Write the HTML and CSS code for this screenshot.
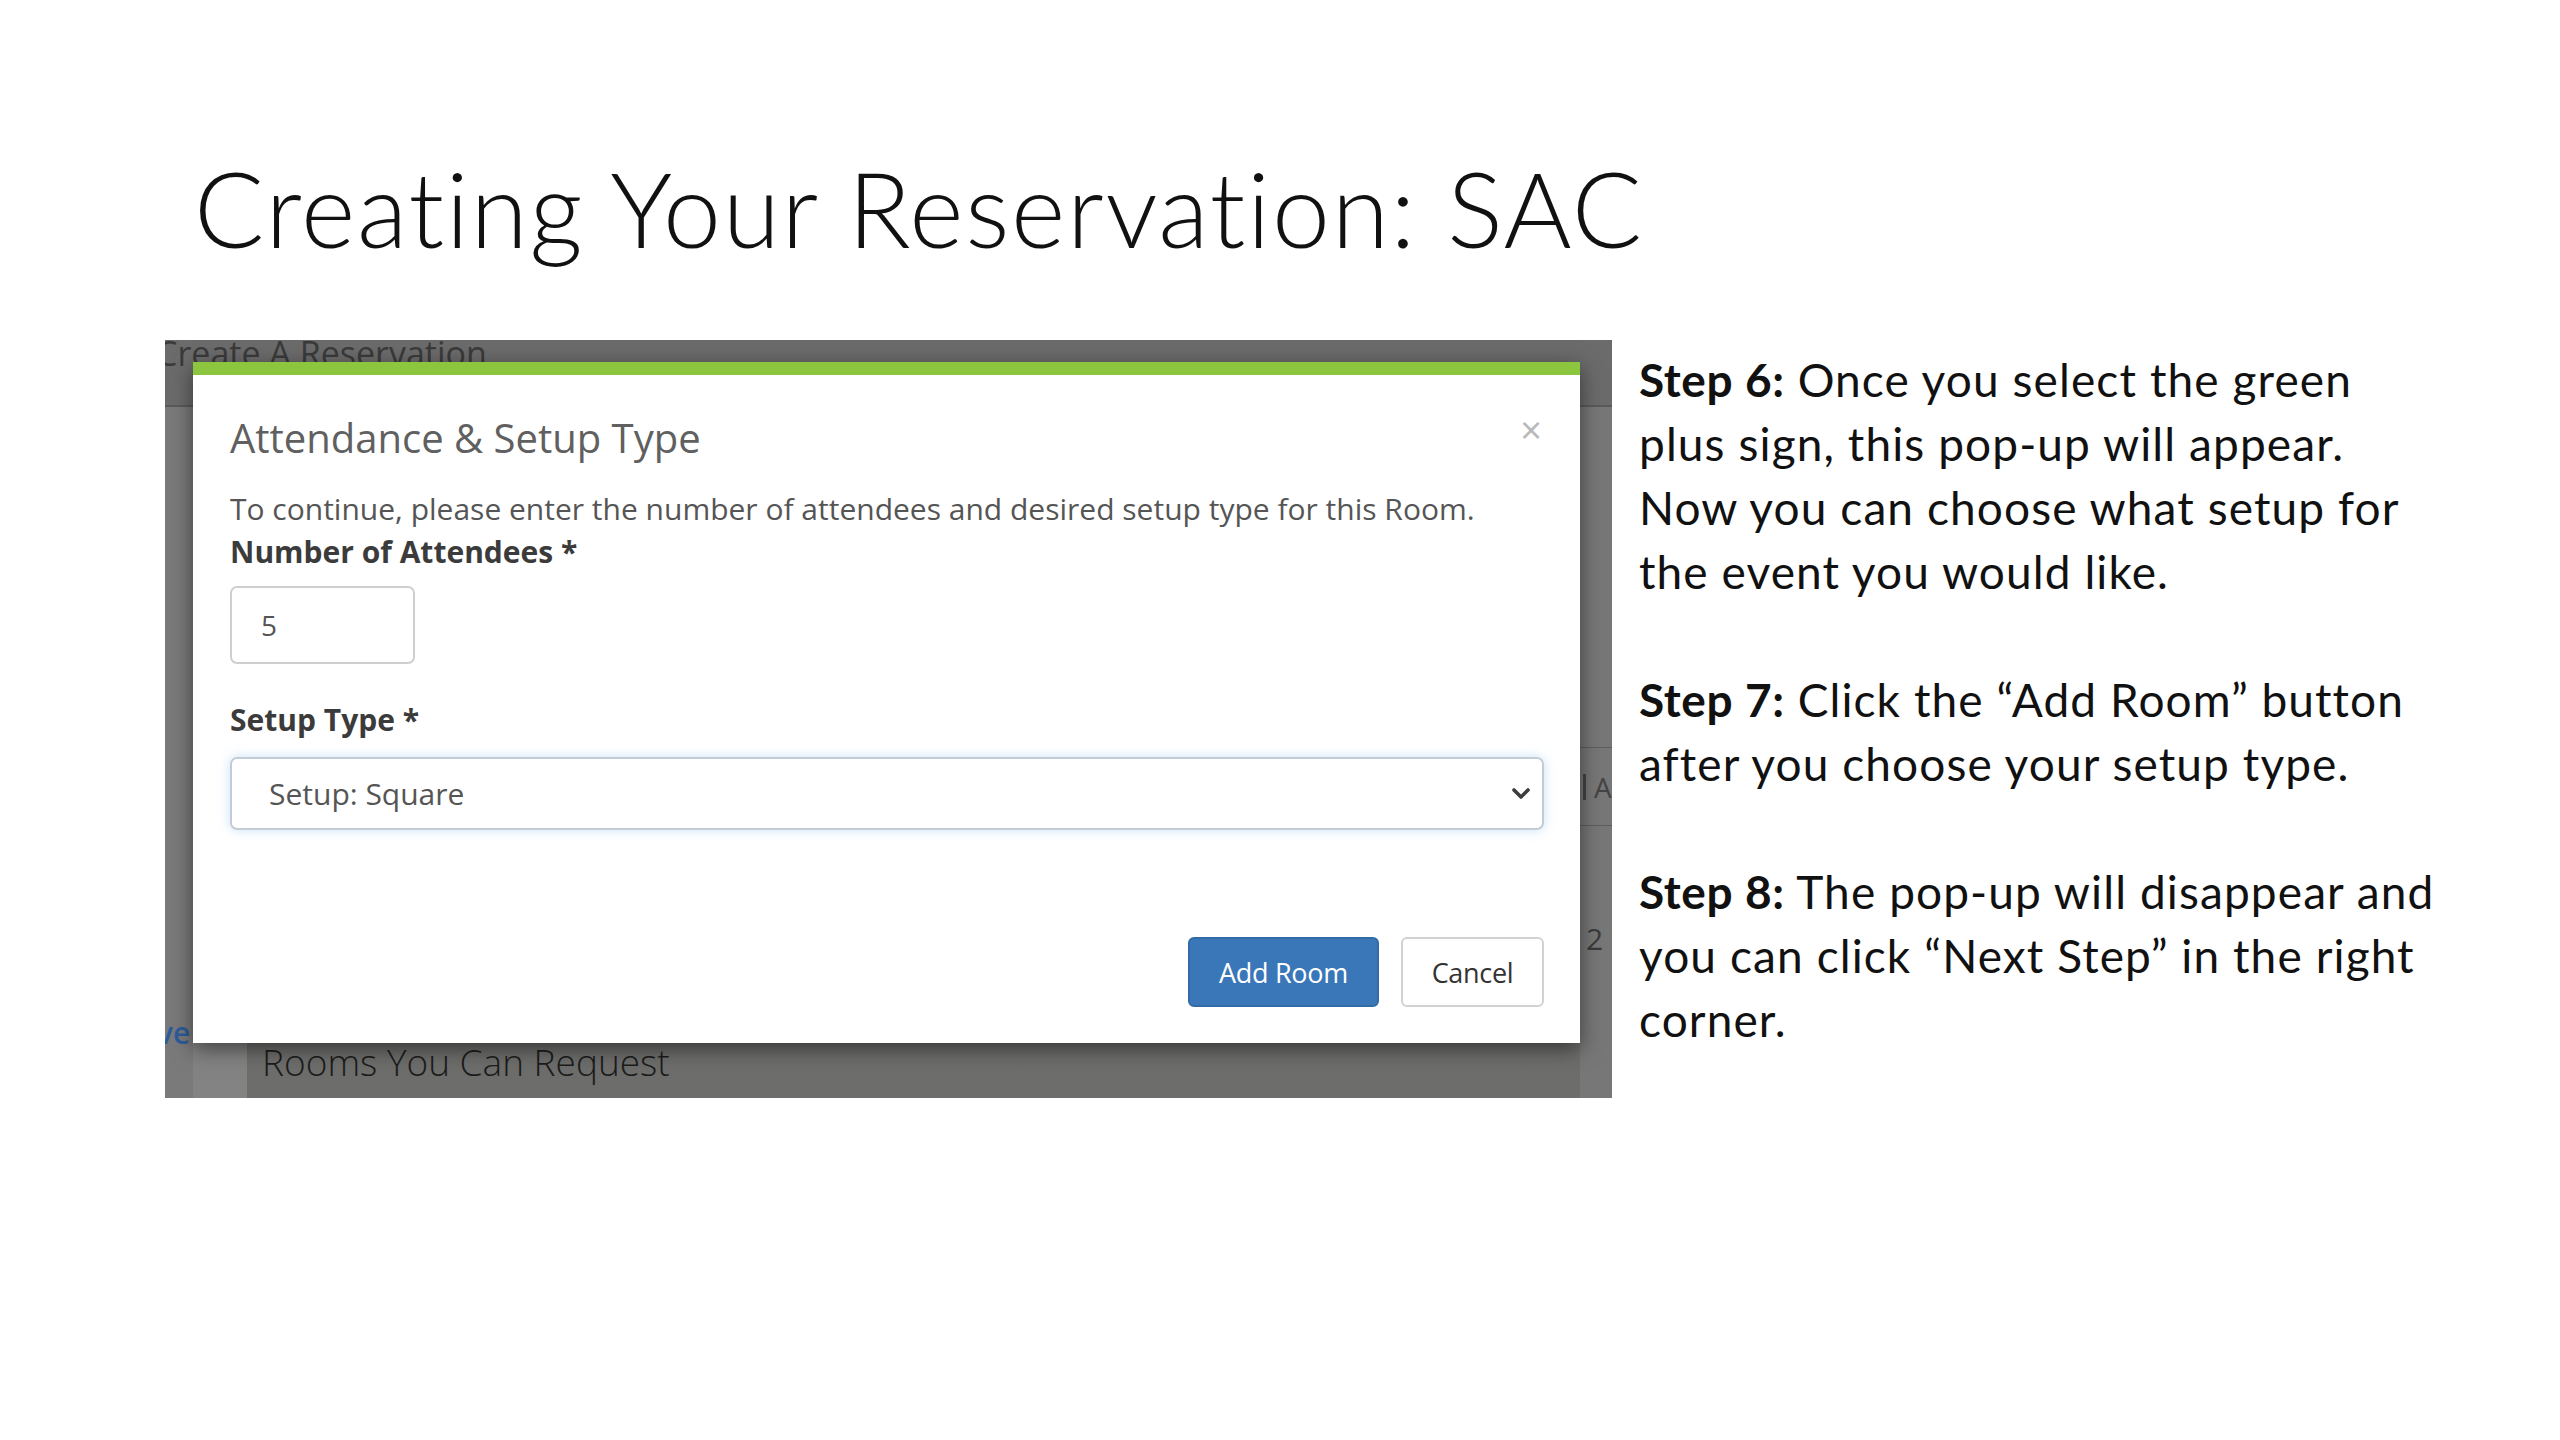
FILE: index.html
```html
<!DOCTYPE html>
<html>
<head>
<meta charset="utf-8">
<link rel="stylesheet" href="styles.css">
</head>
<body>
<div class="slide">
  <h1 class="title">Creating Your Reservation: SAC</h1>
  <div class="content">
    <div class="shot">
      <div class="bd">
        <div class="bd-head"><span class="bd-head-text">Create A Reservation</span></div>
        <div class="bd-main">
          <div class="bd-left"><span class="bd-link">ve</span></div>
          <div class="bd-band"></div>
          <div class="bd-center"><span class="bd-rooms">Rooms You Can Request</span></div>
          <div class="bd-right">
            <div class="bd-right-gap"></div>
            <div class="bd-right-cell"><span class="bd-bar"></span><span class="bd-a">A</span></div>
            <div class="bd-right-num">2</div>
          </div>
        </div>
      </div>
      <div class="modal">
        <div class="modal-head">
          <h2 class="modal-title">Attendance &amp; Setup Type</h2>
          <span class="close">×</span>
        </div>
        <p class="modal-desc">To continue, please enter the number of attendees and desired setup type for this Room.</p>
        <div class="field-label">Number of Attendees *</div>
        <div class="input-num">5</div>
        <div class="field-label label-setup">Setup Type *</div>
        <div class="select">
          <span>Setup: Square</span>
          <svg class="chev" width="18" height="12" viewBox="0 0 18 12"><path d="M2 2 L9 9 L16 2" fill="none" stroke="#3d3d3d" stroke-width="3.6" stroke-linecap="round" stroke-linejoin="round"/></svg>
        </div>
        <div class="modal-foot">
          <span class="btn btn-primary">Add Room</span>
          <span class="btn btn-default">Cancel</span>
        </div>
      </div>
    </div>
    <div class="steps">
      <p class="step"><b>Step 6:</b> Once you select the green<br>plus sign, this pop-up will appear.<br>Now you can choose what setup for<br>the event you would like.</p>
      <p class="step"><b>Step 7:</b> Click the “Add Room” button<br>after you choose your setup type.</p>
      <p class="step"><b>Step 8:</b> The pop-up will disappear and<br>you can click “Next Step” in the right<br>corner.</p>
    </div>
  </div>
</div>
</body>
</html>
```
FILE: styles.css
```css
html, body {
  margin: 0;
  padding: 0;
  background: #ffffff;
}

.slide {
  width: 2560px;
  height: 1440px;
  box-sizing: border-box;
  padding-left: 165px;
  overflow: hidden;
}

.title {
  margin: 156px 0 0 0;
  padding-left: 29px;
  font-family: "Lato", "Open Sans", sans-serif;
  font-weight: 300;
  font-size: 104px;
  line-height: 104px;
  color: #111;
  letter-spacing: 1.7px;
  white-space: nowrap;
}

.content {
  margin-top: 80px;
  display: flex;
  align-items: flex-start;
  gap: 27px;
}

/* screenshot */
.shot {
  position: relative;
  width: 1447px;
  height: 758px;
  flex: none;
  overflow: hidden;
  background: #767676;
  font-family: "Open Sans", sans-serif;
}

.bd {
  display: flex;
  flex-direction: column;
  height: 100%;
}

.bd-head {
  height: 65px;
  flex: none;
  background: #6b6b6b;
  border-bottom: 2px solid #5a5a5a;
  overflow: hidden;
}

.bd-head-text {
  display: block;
  margin: -5px 0 0 -9px;
  font-size: 34px;
  line-height: 36px;
  color: #3a3a3a;
  white-space: nowrap;
}

.bd-main {
  flex: 1;
  display: flex;
}

.bd-left {
  width: 28px;
  flex: none;
  display: flex;
  flex-direction: column;
  justify-content: flex-end;
  padding-bottom: 50px;
  overflow: hidden;
  background: #7a7a7a;
}

.bd-link {
  margin-left: -8px;
  font-size: 30px;
  line-height: 30px;
  font-weight: 600;
  color: #2d5c9c;
}

.bd-band {
  width: 54px;
  flex: none;
  background: #838383;
}

.bd-center {
  flex: 1;
  display: flex;
  flex-direction: column;
  justify-content: flex-end;
  padding-left: 15px;
  padding-bottom: 14px;
  background: linear-gradient(#757575, #6d6d6b);
}

.bd-rooms {
  font-size: 37px;
  line-height: 44px;
  font-weight: 300;
  color: #1c1c1c;
  white-space: nowrap;
}

.bd-right {
  width: 32px;
  flex: none;
  display: flex;
  flex-direction: column;
  background: #777;
  overflow: hidden;
}

.bd-right-gap {
  height: 340px;
  flex: none;
}

.bd-right-cell {
  height: 77px;
  flex: none;
  border-top: 1px solid #5e5e5e;
  border-bottom: 1px solid #5e5e5e;
  display: flex;
  align-items: center;
  gap: 8px;
  padding-left: 3px;
}

.bd-bar {
  width: 3px;
  height: 26px;
  background: #444;
}

.bd-a {
  font-size: 28px;
  color: #444;
}

.bd-right-num {
  margin-top: 98px;
  padding-left: 6px;
  font-size: 30px;
  line-height: 30px;
  color: #3a3a3a;
}

/* modal */
.modal {
  position: absolute;
  left: 28px;
  top: 22px;
  width: 1387px;
  height: 681px;
  box-sizing: border-box;
  background: #fff;
  border-top: 13px solid #8cc63f;
  padding: 0 36px 0 37px;
  box-shadow: 0 6px 20px rgba(0, 0, 0, 0.5);
  display: flex;
  flex-direction: column;
}

.modal-head {
  display: flex;
  justify-content: space-between;
  align-items: flex-start;
  padding-top: 41px;
}

.modal-title {
  margin: 0;
  font-size: 40px;
  line-height: 44px;
  font-weight: 400;
  color: #606060;
  white-space: nowrap;
}

.close {
  margin-top: -9px;
  margin-right: 2px;
  font-size: 38px;
  line-height: 44px;
  color: #b9b9b9;
}

.modal-desc {
  margin: 27px 0 0 0;
  font-size: 30px;
  line-height: 43px;
  color: #555;
  white-space: nowrap;
}

.field-label {
  font-size: 30px;
  line-height: 43px;
  font-weight: 700;
  color: #3b3b3b;
}

.input-num {
  margin-top: 13px;
  width: 185px;
  height: 78px;
  box-sizing: border-box;
  border: 2px solid #cfcfcf;
  border-radius: 7px;
  padding-left: 29px;
  font-size: 28px;
  line-height: 74px;
  color: #555;
}

.label-setup {
  margin-top: 34px;
}

.select {
  margin-top: 16px;
  height: 73px;
  box-sizing: border-box;
  border: 2px solid #c3ccd6;
  border-radius: 7px;
  box-shadow: 0 0 12px rgba(102, 175, 233, 0.35);
  display: flex;
  align-items: center;
  justify-content: space-between;
  padding: 0 12px 0 37px;
  font-size: 30px;
  color: #555;
}

.modal-foot {
  margin-top: 107px;
  display: flex;
  justify-content: flex-end;
  gap: 22px;
}

.btn {
  height: 70px;
  box-sizing: border-box;
  display: flex;
  align-items: center;
  justify-content: center;
  border-radius: 6px;
  font-size: 27px;
  letter-spacing: -0.3px;
}

.btn-primary {
  width: 191px;
  background: #3a77b8;
  border: 2px solid #336ba7;
  color: #fff;
}

.btn-default {
  width: 143px;
  background: #fff;
  border: 2px solid #d2d2d2;
  color: #333;
}

/* steps */
.steps {
  padding-top: 8px;
  font-family: "Lato", "Open Sans", sans-serif;
  font-size: 46px;
  line-height: 64px;
  color: #111;
  letter-spacing: 1.1px;
  white-space: nowrap;
}

.step {
  margin: 0 0 64px 0;
}

.step b {
  font-weight: 700;
  letter-spacing: 0.6px;
}
```
